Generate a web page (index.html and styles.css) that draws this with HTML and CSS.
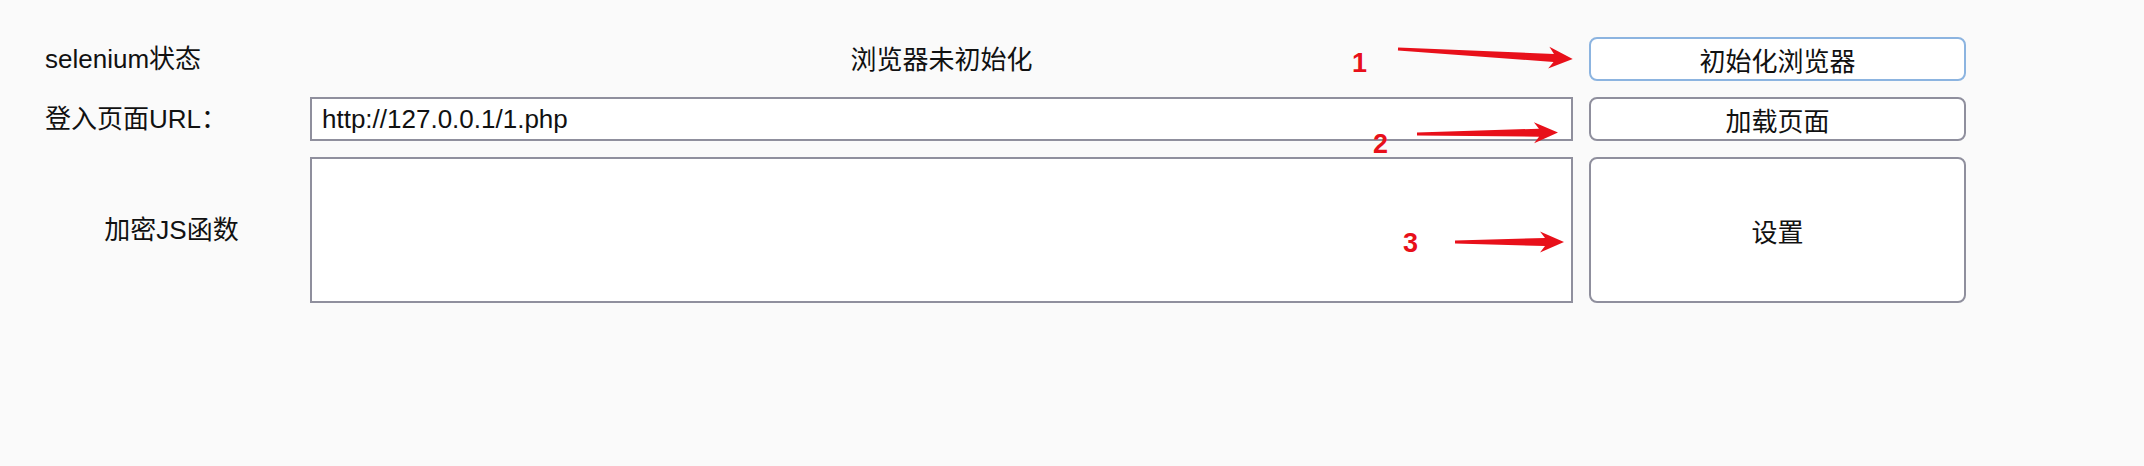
FILE: index.html
```html
<!DOCTYPE html>
<html lang="zh-CN">
<head>
<meta charset="utf-8">
<title>selenium</title>
<link rel="stylesheet" href="styles.css">
</head>
<body>
<main class="form">
  <div class="label">selenium状态</div>
  <div class="status">浏览器未初始化</div>
  <button class="btn btn-focus" type="button">初始化浏览器</button>

  <label class="label" for="url">登入页面URL：</label>
  <input class="field" id="url" type="text" value="http://127.0.0.1/1.php">
  <button class="btn" type="button">加载页面</button>

  <label class="label label-center" for="js">加密JS函数</label>
  <textarea class="field area" id="js"></textarea>
  <button class="btn" type="button">设置</button>
</main>

<svg class="marks" width="2144" height="466" viewBox="0 0 2144 466" aria-hidden="true">
  <g fill="#e8101a">
    <g transform="translate(1398,49) rotate(3.27)">
      <polygon points="0,-1.5 156,-4 151,-11 175,0 151,11 156,4 0,1.5"/>
    </g>
    <g transform="translate(1417,134) rotate(-0.6)">
      <polygon points="0,-1.5 122,-4 117,-10.5 141,0 117,10.5 122,4 0,1.5"/>
    </g>
    <g transform="translate(1455,242)">
      <polygon points="0,-1.5 90,-4 85,-10.5 109,0 85,10.5 90,4 0,1.5"/>
    </g>
  </g>
  <g class="num" fill="#e8101a">
    <text x="1352" y="72">1</text>
    <text x="1373" y="153">2</text>
    <text x="1403" y="252">3</text>
  </g>
</svg>
</body>
</html>
```
FILE: styles.css
```css
html, body {
  margin: 0;
  background: #fafafa;
}

body {
  position: relative;
  width: 2144px;
  height: 466px;
  overflow: hidden;
  font-family: "Liberation Sans", Arial, "Noto Sans CJK SC", sans-serif;
  font-size: 26px;
  color: #111;
}

.form {
  display: grid;
  grid-template-columns: 253px 1263px 381px;
  grid-template-rows: 44px 44px 146px;
  column-gap: 12px;
  row-gap: 16px;
  padding: 37px 0 0 45px;
}

.label {
  align-self: center;
  line-height: 1;
}

.label-center {
  text-align: center;
}

.status {
  align-self: center;
  text-align: center;
  line-height: 1;
  padding-top: 2px;
}

.field {
  box-sizing: border-box;
  width: 100%;
  height: 100%;
  margin: 0;
  border: 2px solid #8f8f9d;
  border-radius: 0;
  background: #fff;
  font: inherit;
  color: #111;
  outline: none;
}

input.field {
  padding: 0 10px;
}

.area {
  resize: none;
  padding: 8px 10px;
}

.btn {
  box-sizing: border-box;
  margin: 0 0 0 4px;
  height: 100%;
  border: 2px solid #8f8f9d;
  border-radius: 8px;
  background: #fff;
  font: inherit;
  color: #111;
  padding: 0;
}

.btn-focus {
  border-color: #8cb4e0;
}

.marks {
  position: absolute;
  top: 0;
  left: 0;
  pointer-events: none;
}

.num text {
  font-family: "Liberation Sans", Arial, sans-serif;
  font-weight: 700;
  font-size: 27px;
}
```
